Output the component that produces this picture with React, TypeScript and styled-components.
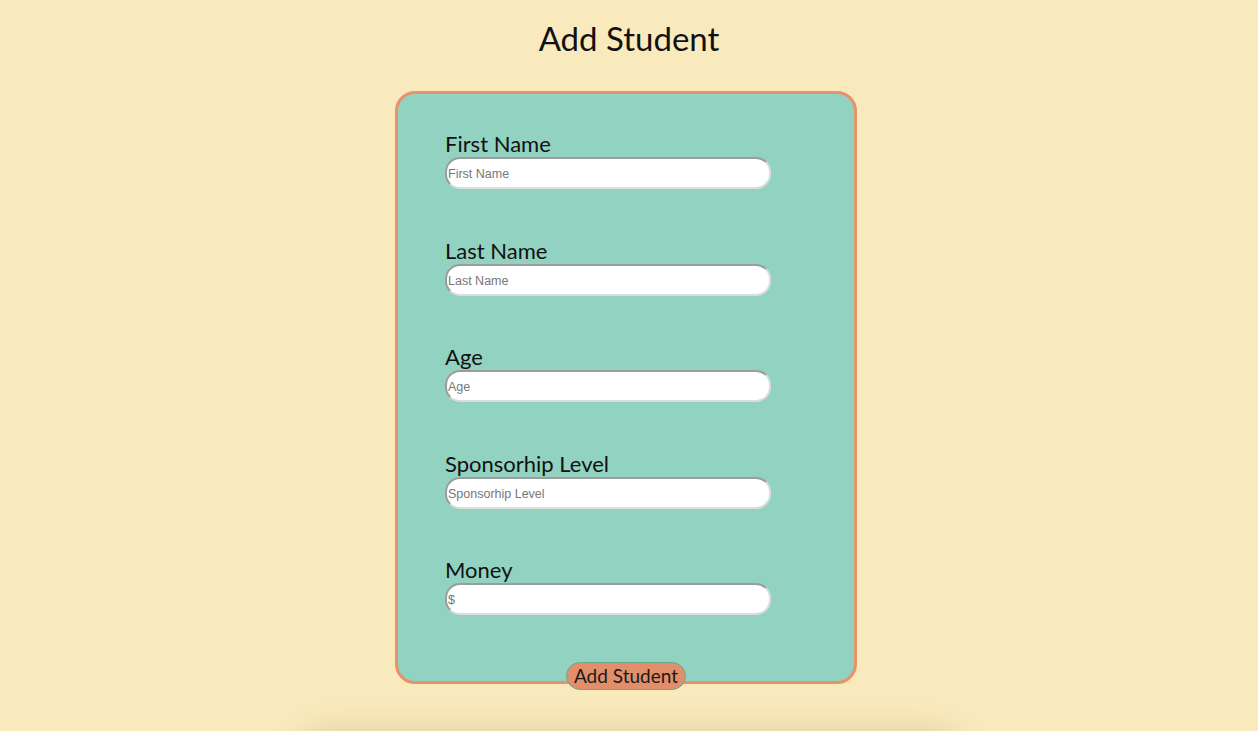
import React from "react";
import styled, { createGlobalStyle } from "styled-components";

const GlobalStyle = createGlobalStyle`
  body {
    margin: 0;
    background-color: #f9eabd;
    font-family: "Lato", "Open Sans", sans-serif;
    color: #111111;
  }
`;

const Page = styled.div`
  display: flex;
  flex-direction: column;
  align-items: center;
  height: 731px;
  overflow: hidden;
`;

const Title = styled.h1`
  margin: 16px 0 0 0;
  font-size: 33px;
  font-weight: 400;
  line-height: 44px;
`;

const Card = styled.form`
  box-sizing: border-box;
  width: 462px;
  margin: 31px 0 0 -6px;
  padding: 37px 47px 0 47px;
  background-color: #91d2c1;
  border: 3px solid #e8926c;
  border-radius: 20px;
  display: flex;
  flex-direction: column;
  gap: 48.5px;
`;

const Field = styled.div`
  display: flex;
  flex-direction: column;
`;

const Label = styled.label`
  font-size: 22px;
  line-height: 26px;
`;

const Input = styled.input`
  box-sizing: border-box;
  width: 326px;
  height: 32px;
  padding: 2px 1px 0 1px;
  border: 2px solid #dcdcdc;
  border-top-color: #9c9c9c;
  border-left-color: #9c9c9c;
  border-radius: 15px;
  background-color: #ffffff;
  font-family: "Liberation Sans", Arial, sans-serif;
  font-size: 12.5px;
  outline: none;
  &::placeholder {
    color: #777777;
  }
`;

const Footer = styled.div`
  display: flex;
  justify-content: center;
  margin: -2px 0 -9px 0;
`;

const SubmitButton = styled.button`
  height: 28px;
  padding: 0 7px;
  border: 1px solid #6aa890;
  border-radius: 14px;
  background-color: #e28e6a;
  color: #1a1a1a;
  font-family: "Lato", "Open Sans", sans-serif;
  font-size: 19px;
  cursor: pointer;
`;

const ListPanel = styled.div`
  flex-shrink: 0;
  width: 660px;
  height: 200px;
  margin-top: 52px;
  border-radius: 30px;
  background-color: #f9eabd;
  box-shadow: 0 0 30px 6px rgba(120, 100, 40, 0.2);
`;

const fields = [
  { label: "First Name", placeholder: "First Name" },
  { label: "Last Name", placeholder: "Last Name" },
  { label: "Age", placeholder: "Age" },
  { label: "Sponsorhip Level", placeholder: "Sponsorhip Level" },
  { label: "Money", placeholder: "$" },
];

const App: React.FC = () => {
  return (
    <Page>
      <GlobalStyle />
      <Title>Add Student</Title>
      <Card onSubmit={(e) => e.preventDefault()}>
        {fields.map((f) => (
          <Field key={f.label}>
            <Label>{f.label}</Label>
            <Input type="text" placeholder={f.placeholder} />
          </Field>
        ))}
        <Footer>
          <SubmitButton type="submit">Add Student</SubmitButton>
        </Footer>
      </Card>
      <ListPanel />
    </Page>
  );
};

export default App;
